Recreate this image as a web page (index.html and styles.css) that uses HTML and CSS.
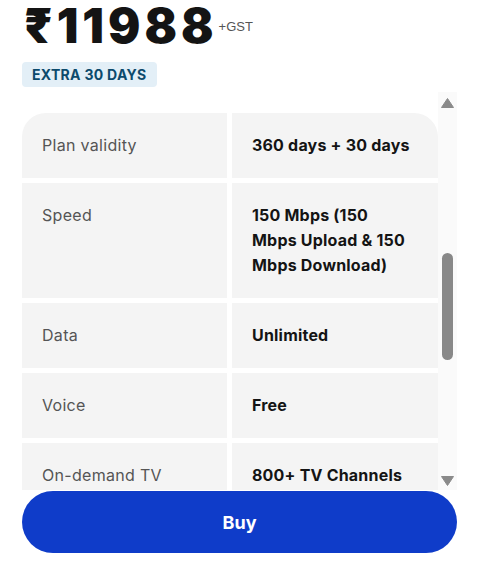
FILE: index.html
```html
<!DOCTYPE html>
<html>
<head>
<meta charset="utf-8">
<link rel="stylesheet" href="styles.css">
</head>
<body>
<div class="page">
  <div class="price-row">
    <span class="price">₹11988</span>
    <span class="gst">+GST</span>
  </div>
  <div class="badge">EXTRA 30 DAYS</div>
  <div class="scroll-area">
    <div class="viewport">
      <div class="table">
        <div class="cell label first-l">Plan validity</div>
        <div class="cell value first-r">360 days + 30 days</div>
        <div class="cell label">Speed</div>
        <div class="cell value">150 Mbps (150 Mbps Upload &amp; 150 Mbps Download)</div>
        <div class="cell label">Data</div>
        <div class="cell value">Unlimited</div>
        <div class="cell label">Voice</div>
        <div class="cell value">Free</div>
        <div class="cell label">On-demand TV</div>
        <div class="cell value">800+ TV Channels</div>
      </div>
    </div>
    <div class="scrollbar">
      <svg class="arrow" width="13" height="10" viewBox="0 0 13 10"><polygon points="6.5,0.5 12.5,9.5 0.5,9.5" fill="#8a8a8a" stroke="#8a8a8a" stroke-width="1" stroke-linejoin="round"/></svg>
      <div class="thumb"></div>
      <div class="spacer"></div>
      <svg class="arrow" width="13" height="10" viewBox="0 0 13 10"><polygon points="0.5,0.5 12.5,0.5 6.5,9.5" fill="#8a8a8a" stroke="#8a8a8a" stroke-width="1" stroke-linejoin="round"/></svg>
    </div>
  </div>
  <button class="buy">Buy</button>
</div>
</body>
</html>
```
FILE: styles.css
```css
html, body {
  margin: 0;
  padding: 0;
  background: #fff;
}
body {
  font-family: Inter, "Noto Sans", sans-serif;
  color: #141414;
}
.page {
  padding: 0 30px 0 22px;
  display: flex;
  flex-direction: column;
  align-items: flex-start;
}
.price-row {
  display: flex;
  align-items: flex-start;
  gap: 1px;
}
.price {
  font-size: 48px;
  line-height: 52px;
  font-weight: 900;
  letter-spacing: 4px;
  margin-left: 2px;
  color: #141414;
}
.gst {
  font-family: "Liberation Sans", Arial, sans-serif;
  font-size: 13px;
  line-height: 15px;
  margin-top: 19px;
  color: #555;
}
.badge {
  margin-top: 10px;
  background: #e3eff7;
  color: #0c4a6c;
  font-weight: 700;
  font-size: 14px;
  line-height: 25px;
  letter-spacing: 0.3px;
  padding: 0 10px;
  border-radius: 4px;
}
.scroll-area {
  margin-top: 5px;
  width: 435px;
  height: 398px;
  display: flex;
}
.viewport {
  width: 416px;
  height: 100%;
  overflow: hidden;
  padding-top: 21px;
  box-sizing: border-box;
}
.table {
  display: grid;
  grid-template-columns: 205px 206px;
  gap: 5px;
}
.cell {
  background: #f4f4f4;
  padding: 20px 20px;
  font-size: 16px;
  line-height: 25px;
  letter-spacing: 0.3px;
}
.label {
  color: #555;
}
.value {
  font-weight: 700;
  color: #141414;
  letter-spacing: 0.2px;
  padding-right: 22px;
}
.first-l { border-top-left-radius: 24px; }
.first-r { border-top-right-radius: 24px; }
.scrollbar {
  width: 19px;
  height: 100%;
  background: #fafafa;
  display: flex;
  flex-direction: column;
  align-items: center;
  padding: 6px 0 4px;
  box-sizing: border-box;
}
.arrow {
  flex: none;
  display: block;
}
.thumb {
  flex: none;
  margin-top: 145px;
  width: 11px;
  height: 107px;
  border-radius: 6px;
  background: #888;
}
.spacer {
  flex: 1;
}
.buy {
  margin-top: 1px;
  width: 435px;
  height: 62px;
  border: none;
  border-radius: 31px;
  background: #0f3cc9;
  color: #fff;
  font-family: Inter, "Noto Sans", sans-serif;
  font-size: 18px;
  font-weight: 700;
}
```
